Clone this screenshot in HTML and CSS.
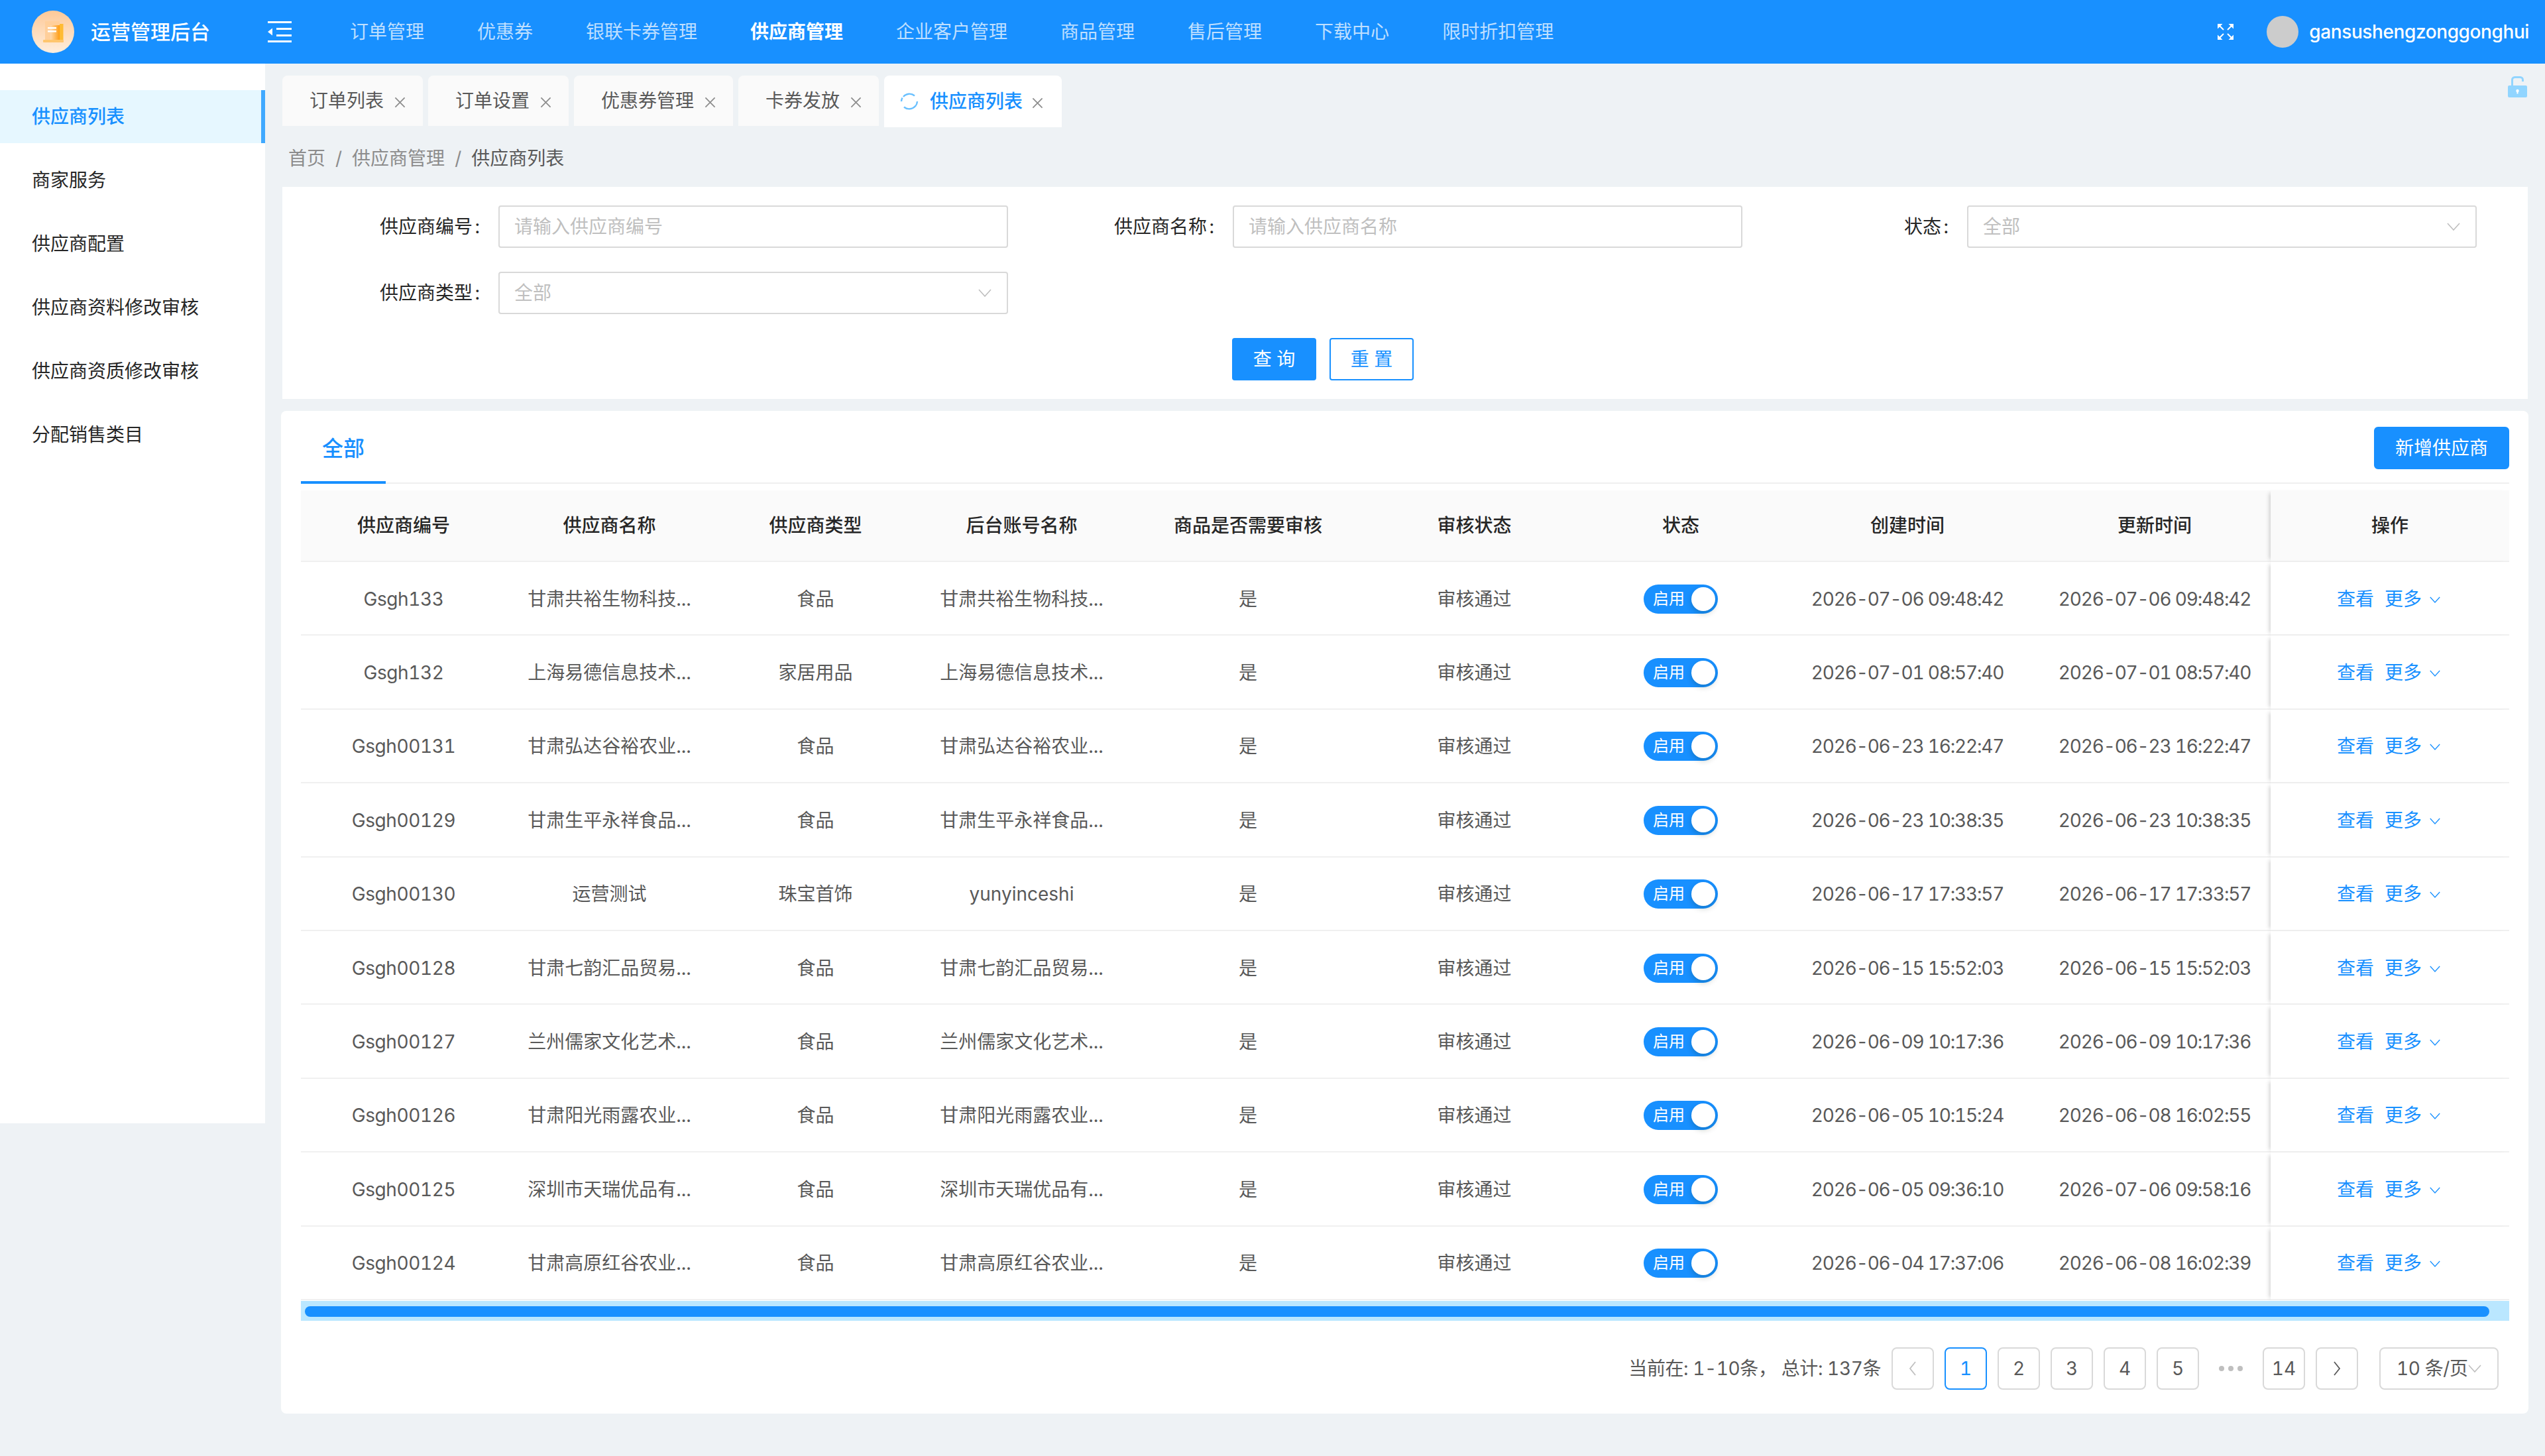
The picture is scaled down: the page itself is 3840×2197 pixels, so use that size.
FILE: index.html
```html
<!DOCTYPE html>
<html lang="zh-CN">
<head>
<meta charset="utf-8">
<title>运营管理后台</title>
<link rel="stylesheet" href="styles.css">
</head>
<body>
<svg class="sprite" aria-hidden="true">
  <symbol id="i-x" viewBox="0 0 18 18"><path d="M1.500 1.500 16.500 16.500M16.500 1.500 1.500 16.500" fill="none" stroke="currentColor" stroke-width="1.8"/></symbol>
  <symbol id="i-down" viewBox="0 0 20 12"><path d="M1 1 10 11 19 1" fill="none" stroke="currentColor" stroke-width="1.6"/></symbol>
</svg>
<header class="topbar">
  <svg class="logo" viewBox="0 0 64 64">
    <defs>
      <linearGradient id="lg" x1="0" y1="0" x2="0" y2="1"><stop offset="0" stop-color="#fdc998"/><stop offset="1" stop-color="#ffeedd"/></linearGradient>
      <linearGradient id="lh" x1="0" y1="0" x2="1" y2="0"><stop offset="0" stop-color="#ffd9ae"/><stop offset="1" stop-color="#ff9d14"/></linearGradient>
    </defs>
    <circle cx="32" cy="32" r="32" fill="url(#lg)"/>
    <rect x="40" y="20" width="7.5" height="24" fill="#ffbb33"/>
    <rect x="20" y="16" width="22" height="29" fill="#ffcf9b"/>
    <rect x="28" y="22" width="14" height="23" fill="url(#lh)"/>
    <rect x="17" y="44" width="31" height="4" rx="1" fill="#ffc66e"/>
    <rect x="24" y="25" width="13" height="2.5" fill="#fff"/>
    <rect x="24" y="30" width="13" height="2.5" fill="#fff"/>
  </svg>
  <div class="brand">运营管理后台</div>
  <svg class="collapse" viewBox="0 0 36 32"><path d="M0 0h36v3H0zM13 10h23v3H13zM13 20h23v3H13zM0 29h36v3H0zM0 16l7-5.500v11z" fill="#fff"/></svg>
  <nav class="nav">
    <a class="nav-item">订单管理</a>
    <a class="nav-item">优惠券</a>
    <a class="nav-item">银联卡券管理</a>
    <a class="nav-item nav-on">供应商管理</a>
    <a class="nav-item">企业客户管理</a>
    <a class="nav-item">商品管理</a>
    <a class="nav-item">售后管理</a>
    <a class="nav-item">下载中心</a>
    <a class="nav-item">限时折扣管理</a>
  </nav>
  <div class="user">
    <svg class="full" viewBox="0 0 24 24"><path d="M3 3 9 9M21 3 15 9M3 21 9 15M21 21 15 15" fill="none" stroke="#fff" stroke-width="2"/><path d="M0 0h7.500L0 7.500zM24 0h-7.500L24 7.500zM0 24h7.500L0 16.500zM24 24h-7.500L24 16.500z" fill="#fff"/></svg>
    <span class="avatar"></span>
    <span class="uname">gansushengzonggonghui</span>
  </div>
</header>
<div class="main">
  <aside class="side">
    <a class="side-item side-on">供应商列表</a>
    <a class="side-item">商家服务</a>
    <a class="side-item">供应商配置</a>
    <a class="side-item">供应商资料修改审核</a>
    <a class="side-item">供应商资质修改审核</a>
    <a class="side-item">分配销售类目</a>
  </aside>
  <section class="content">
    <div class="tabs">
      <div class="tab">订单列表<svg class="tab-x"><use href="#i-x"/></svg></div>
      <div class="tab">订单设置<svg class="tab-x"><use href="#i-x"/></svg></div>
      <div class="tab">优惠券管理<svg class="tab-x"><use href="#i-x"/></svg></div>
      <div class="tab">卡券发放<svg class="tab-x"><use href="#i-x"/></svg></div>
      <div class="tab tab-on">
        <svg class="reload" viewBox="0 0 28 28"><path d="M5 7A12 12 0 0 1 22 5.500M26 14A12 12 0 0 1 23 21.500M23 21A12 12 0 0 1 6 22.500M2 14A12 12 0 0 1 3.500 8.500" fill="none" stroke="#69c0ff" stroke-width="2.400"/></svg>
        供应商列表<svg class="tab-x"><use href="#i-x"/></svg>
      </div>
      <svg class="lock" viewBox="0 0 29 32"><path d="M6.500 15V5.500a4 4 0 0 1 4-4h8a4 4 0 0 1 4 4V8" fill="none" stroke="#91d5ff" stroke-width="3"/><path d="M2 14h25a2 2 0 0 1 2 2v14a2 2 0 0 1-2 2H2a2 2 0 0 1-2-2V16a2 2 0 0 1 2-2z" fill="#91d5ff"/><circle cx="14.500" cy="22" r="2.200" fill="#fff"/><path d="M13.500 22h2v4.500h-2z" fill="#fff"/></svg>
    </div>
    <div class="crumb"><span>首页</span><i>/</i><span>供应商管理</span><i>/</i><b>供应商列表</b></div>
    <form class="filter">
      <div class="fields">
        <div class="field"><label class="flabel">供应商编号 :</label><div class="finput">请输入供应商编号</div></div>
        <div class="field"><label class="flabel">供应商名称 :</label><div class="finput">请输入供应商名称</div></div>
        <div class="field"><label class="flabel">状态 :</label><div class="finput">全部<svg class="fdown"><use href="#i-down"/></svg></div></div>
        <div class="field"><label class="flabel">供应商类型 :</label><div class="finput">全部<svg class="fdown"><use href="#i-down"/></svg></div></div>
      </div>
      <div class="factions">
        <button type="button" class="btn btn-pri">查 询</button>
        <button type="button" class="btn btn-line">重 置</button>
      </div>
    </form>
    <div class="card">
      <div class="card-head">
        <div class="ctab">全部</div>
        <button type="button" class="btn btn-pri btn-add">新增供应商</button>
      </div>
      <div class="table">
        <div class="row row-head">
          <div class="cell">供应商编号</div><div class="cell">供应商名称</div><div class="cell">供应商类型</div><div class="cell">后台账号名称</div><div class="cell">商品是否需要审核</div><div class="cell">审核状态</div><div class="cell">状态</div><div class="cell">创建时间</div><div class="cell">更新时间</div><div class="cell cell-fix">操作</div>
        </div>
        <div class="row">
          <div class="cell cell-id">Gsgh133</div><div class="cell">甘肃共裕生物科技...</div><div class="cell">食品</div><div class="cell">甘肃共裕生物科技...</div><div class="cell">是</div><div class="cell">审核通过</div><div class="cell"><span class="switch"><span class="sw-t">启用</span><span class="sw-k"></span></span></div><div class="cell cell-date">2026-07-06 09:48:42</div><div class="cell cell-date">2026-07-06 09:48:42</div><div class="cell cell-fix"><a class="op">查看</a><a class="op">更多<svg class="op-d"><use href="#i-down"/></svg></a></div>
        </div>
        <div class="row">
          <div class="cell cell-id">Gsgh132</div><div class="cell">上海易德信息技术...</div><div class="cell">家居用品</div><div class="cell">上海易德信息技术...</div><div class="cell">是</div><div class="cell">审核通过</div><div class="cell"><span class="switch"><span class="sw-t">启用</span><span class="sw-k"></span></span></div><div class="cell cell-date">2026-07-01 08:57:40</div><div class="cell cell-date">2026-07-01 08:57:40</div><div class="cell cell-fix"><a class="op">查看</a><a class="op">更多<svg class="op-d"><use href="#i-down"/></svg></a></div>
        </div>
        <div class="row">
          <div class="cell cell-id">Gsgh00131</div><div class="cell">甘肃弘达谷裕农业...</div><div class="cell">食品</div><div class="cell">甘肃弘达谷裕农业...</div><div class="cell">是</div><div class="cell">审核通过</div><div class="cell"><span class="switch"><span class="sw-t">启用</span><span class="sw-k"></span></span></div><div class="cell cell-date">2026-06-23 16:22:47</div><div class="cell cell-date">2026-06-23 16:22:47</div><div class="cell cell-fix"><a class="op">查看</a><a class="op">更多<svg class="op-d"><use href="#i-down"/></svg></a></div>
        </div>
        <div class="row">
          <div class="cell cell-id">Gsgh00129</div><div class="cell">甘肃生平永祥食品...</div><div class="cell">食品</div><div class="cell">甘肃生平永祥食品...</div><div class="cell">是</div><div class="cell">审核通过</div><div class="cell"><span class="switch"><span class="sw-t">启用</span><span class="sw-k"></span></span></div><div class="cell cell-date">2026-06-23 10:38:35</div><div class="cell cell-date">2026-06-23 10:38:35</div><div class="cell cell-fix"><a class="op">查看</a><a class="op">更多<svg class="op-d"><use href="#i-down"/></svg></a></div>
        </div>
        <div class="row">
          <div class="cell cell-id">Gsgh00130</div><div class="cell">运营测试</div><div class="cell">珠宝首饰</div><div class="cell">yunyinceshi</div><div class="cell">是</div><div class="cell">审核通过</div><div class="cell"><span class="switch"><span class="sw-t">启用</span><span class="sw-k"></span></span></div><div class="cell cell-date">2026-06-17 17:33:57</div><div class="cell cell-date">2026-06-17 17:33:57</div><div class="cell cell-fix"><a class="op">查看</a><a class="op">更多<svg class="op-d"><use href="#i-down"/></svg></a></div>
        </div>
        <div class="row">
          <div class="cell cell-id">Gsgh00128</div><div class="cell">甘肃七韵汇品贸易...</div><div class="cell">食品</div><div class="cell">甘肃七韵汇品贸易...</div><div class="cell">是</div><div class="cell">审核通过</div><div class="cell"><span class="switch"><span class="sw-t">启用</span><span class="sw-k"></span></span></div><div class="cell cell-date">2026-06-15 15:52:03</div><div class="cell cell-date">2026-06-15 15:52:03</div><div class="cell cell-fix"><a class="op">查看</a><a class="op">更多<svg class="op-d"><use href="#i-down"/></svg></a></div>
        </div>
        <div class="row">
          <div class="cell cell-id">Gsgh00127</div><div class="cell">兰州儒家文化艺术...</div><div class="cell">食品</div><div class="cell">兰州儒家文化艺术...</div><div class="cell">是</div><div class="cell">审核通过</div><div class="cell"><span class="switch"><span class="sw-t">启用</span><span class="sw-k"></span></span></div><div class="cell cell-date">2026-06-09 10:17:36</div><div class="cell cell-date">2026-06-09 10:17:36</div><div class="cell cell-fix"><a class="op">查看</a><a class="op">更多<svg class="op-d"><use href="#i-down"/></svg></a></div>
        </div>
        <div class="row">
          <div class="cell cell-id">Gsgh00126</div><div class="cell">甘肃阳光雨露农业...</div><div class="cell">食品</div><div class="cell">甘肃阳光雨露农业...</div><div class="cell">是</div><div class="cell">审核通过</div><div class="cell"><span class="switch"><span class="sw-t">启用</span><span class="sw-k"></span></span></div><div class="cell cell-date">2026-06-05 10:15:24</div><div class="cell cell-date">2026-06-08 16:02:55</div><div class="cell cell-fix"><a class="op">查看</a><a class="op">更多<svg class="op-d"><use href="#i-down"/></svg></a></div>
        </div>
        <div class="row">
          <div class="cell cell-id">Gsgh00125</div><div class="cell">深圳市天瑞优品有...</div><div class="cell">食品</div><div class="cell">深圳市天瑞优品有...</div><div class="cell">是</div><div class="cell">审核通过</div><div class="cell"><span class="switch"><span class="sw-t">启用</span><span class="sw-k"></span></span></div><div class="cell cell-date">2026-06-05 09:36:10</div><div class="cell cell-date">2026-07-06 09:58:16</div><div class="cell cell-fix"><a class="op">查看</a><a class="op">更多<svg class="op-d"><use href="#i-down"/></svg></a></div>
        </div>
        <div class="row">
          <div class="cell cell-id">Gsgh00124</div><div class="cell">甘肃高原红谷农业...</div><div class="cell">食品</div><div class="cell">甘肃高原红谷农业...</div><div class="cell">是</div><div class="cell">审核通过</div><div class="cell"><span class="switch"><span class="sw-t">启用</span><span class="sw-k"></span></span></div><div class="cell cell-date">2026-06-04 17:37:06</div><div class="cell cell-date">2026-06-08 16:02:39</div><div class="cell cell-fix"><a class="op">查看</a><a class="op">更多<svg class="op-d"><use href="#i-down"/></svg></a></div>
        </div>
      </div>
      <div class="scroll"><div class="thumb"></div></div>
      <div class="pager">
        <span class="total">当前在: 1-10条， 总计: 137条</span>
        <a class="pg pg-off"><svg class="pg-a" viewBox="0 0 12 22"><path d="M10 1 2 11l8 10" fill="none" stroke="currentColor" stroke-width="1.800"/></svg></a>
        <a class="pg pg-on">1</a>
        <a class="pg">2</a>
        <a class="pg">3</a>
        <a class="pg">4</a>
        <a class="pg">5</a>
        <a class="pg-dots"><i></i><i></i><i></i></a>
        <a class="pg">14</a>
        <a class="pg"><svg class="pg-a" viewBox="0 0 12 22"><path d="M2 1l8 10-8 10" fill="none" stroke="currentColor" stroke-width="1.800"/></svg></a>
        <div class="pg-size">10 条/页<svg class="pg-d"><use href="#i-down"/></svg></div>
      </div>
    </div>
  </section>
</div>
</body>
</html>
```
FILE: styles.css
```css
* { box-sizing: border-box; }
html, body { margin: 0; padding: 0; }
body {
  width: 3840px;
  height: 2197px;
  overflow: hidden;
  background: #eef2f5;
  color: #595959;
  font-family: Inter, "Noto Sans CJK SC", sans-serif;
  font-size: 28px;
  line-height: 40px;
  font-variant-numeric: tabular-nums;
}
.sprite { position: absolute; width: 0; height: 0; }
a { color: inherit; text-decoration: none; }

.topbar { display: flex; align-items: center; height: 96px; padding: 0 24px 0 48px; background: #1890ff; }
.logo { width: 64px; height: 64px; flex: none; }
.brand { margin-left: 25px; color: #fff; font-size: 30px; font-weight: 500; white-space: nowrap; }
.collapse { width: 36px; height: 32px; margin-left: 87px; flex: none; }
.nav { display: flex; margin-left: 48px; }
.nav-item { padding: 0 40px; color: rgba(255,255,255,.72); white-space: nowrap; }
.nav-on { color: #fff; font-weight: 700; }
.user { display: flex; align-items: center; margin-left: auto; }
.full { width: 24px; height: 24px; margin-right: 50px; }
.avatar { width: 48px; height: 48px; margin-right: 16px; border-radius: 50%; background: #ccc; }
.uname { color: #fff; font-weight: 500; letter-spacing: -.4px; }

.main { display: flex; align-items: flex-start; }
.side { width: 400px; height: 1599px; padding-top: 40px; background: #fff; flex: none; }
.side-item { display: flex; align-items: center; height: 80px; margin-bottom: 16px; padding-left: 48px; color: #262626; }
.side-on { color: #1890ff; font-weight: 500; background: #e6f7ff; border-right: 6px solid #40a9ff; }

.content { flex: 1; min-width: 0; padding: 0 25px 0 24px; }
.tabs { display: flex; align-items: flex-start; gap: 8px; height: 94px; padding: 18px 2px 0 2px; }
.tab { display: flex; align-items: center; height: 76px; padding: 0 26px 0 41px; background: #fafafa; border-radius: 8px 8px 0 0; white-space: nowrap; }
.tab-x { width: 17px; height: 17px; margin-left: 16px; margin-top: 4px; color: #8c8c8c; }
.tab-on { height: 78px; padding: 0 28px 0 24px; background: #fff; color: #1890ff; font-weight: 500; }
.tab-on .tab-x { margin-left: 14px; }
.reload { width: 28px; height: 28px; margin-right: 17px; }
.lock { width: 29px; height: 32px; margin-left: auto; margin-top: 1px; }

.crumb { display: flex; align-items: center; height: 92px; padding: 6px 0 0 11px; color: #8c8c8c; }
.crumb i { margin: 0 15px; font-style: normal; }
.crumb b { color: #595959; font-weight: 400; }

.filter { margin: 0 1px 18px 2px; padding: 28px 0; background: #fff; }
.fields { display: grid; grid-template-columns: repeat(3, 1108px); row-gap: 36px; }
.field { display: flex; align-items: center; }
.flabel { width: 326px; padding-right: 28px; text-align: right; color: #262626; word-spacing: -4px; }
.finput { display: flex; align-items: center; justify-content: space-between; width: 768.5px; height: 64px; padding: 0 23px 0 22px; border: 2px solid #d9d9d9; border-radius: 4px; color: #bfbfbf; }
.fdown { width: 20px; height: 12px; color: #bfbfbf; }
.factions { display: flex; gap: 20px; margin-top: 36px; padding-left: 1433px; }
.btn { height: 64px; padding: 0; border: 2px solid #1890ff; border-radius: 4px; font: inherit; cursor: pointer; }
.factions .btn { width: 127px; }
.btn-pri { background: #1890ff; color: #fff; }
.btn-line { background: #fff; color: #1890ff; }
.btn-add { width: 204px; margin-top: 24px; border-radius: 6px; }

.card { padding: 0 29px 36px 30px; background: #fff; border-radius: 8px; }
.card-head { display: flex; align-items: flex-start; justify-content: space-between; height: 110px; border-bottom: 2px solid #f0f0f0; }
.ctab { width: 128px; height: 110px; padding-top: 37px; text-align: center; color: #1890ff; font-size: 32px; font-weight: 500; border-bottom: 4px solid #1890ff; }

.table { margin-top: 10px; }
.row { display: grid; grid-template-columns: 310px 311px 311px 311px 372px 311px 312px 372px 374px 348px; height: 111.4px; }
.row-head { height: 108px; background: #fafafa; color: #262626; font-weight: 500; }
.cell { display: flex; align-items: center; justify-content: center; min-width: 0; padding-top: 2px; border-bottom: 2px solid #f0f0f0; white-space: nowrap; }
.row-head .cell { padding-top: 0; }
.cell-id { letter-spacing: -.4px; }
.cell-date { letter-spacing: -1.2px; }
.cell-fix { position: relative; margin-left: -12px; background: #fff; box-shadow: -6px 0 6px -4px rgba(0,0,0,.18); justify-content: flex-start; padding-left: 100px; gap: 16px; }
.row-head .cell-fix { background: #fafafa; justify-content: center; padding-left: 0; }
.op { display: flex; align-items: center; color: #1890ff; }
.op-d { width: 16px; height: 12px; margin-left: 12px; margin-top: 2px; }

.switch { display: flex; align-items: center; justify-content: space-between; width: 112px; height: 44px; padding: 0 4px 0 14px; border-radius: 22px; background: #1890ff; }
.sw-t { color: #fff; font-size: 24px; }
.sw-k { width: 36px; height: 36px; border-radius: 50%; background: #fff; box-shadow: 0 4px 8px rgba(0,35,11,.2); }

.scroll { height: 30px; margin-top: 1px; padding: 8px 30px 6px 6px; background: #bae7ff; }
.thumb { height: 16px; border-radius: 8px; background: #1890ff; }

.pager { display: flex; align-items: center; justify-content: flex-end; gap: 16px; margin-top: 40px; padding-right: 16px; }
.total { white-space: nowrap; letter-spacing: -.4px; }
.pg { display: flex; align-items: center; justify-content: center; width: 64px; height: 64px; border: 2px solid #d9d9d9; border-radius: 8px; background: #fff; }
.pg-off { color: #bfbfbf; }
.pg-on { color: #1890ff; border-color: #1890ff; }
.pg-a { width: 12px; height: 22px; }
.pg-dots { display: flex; align-items: center; justify-content: center; gap: 6px; width: 64px; height: 64px; }
.pg-dots i { width: 8px; height: 8px; border-radius: 50%; background: #bfbfbf; }
.pg-size { display: flex; align-items: center; justify-content: space-between; width: 180px; height: 64px; margin-left: 16px; padding: 0 24px; border: 2px solid #d9d9d9; border-radius: 8px; white-space: nowrap; letter-spacing: -.4px; }
.pg-d { width: 20px; height: 12px; color: #bfbfbf; flex: none; }
```
